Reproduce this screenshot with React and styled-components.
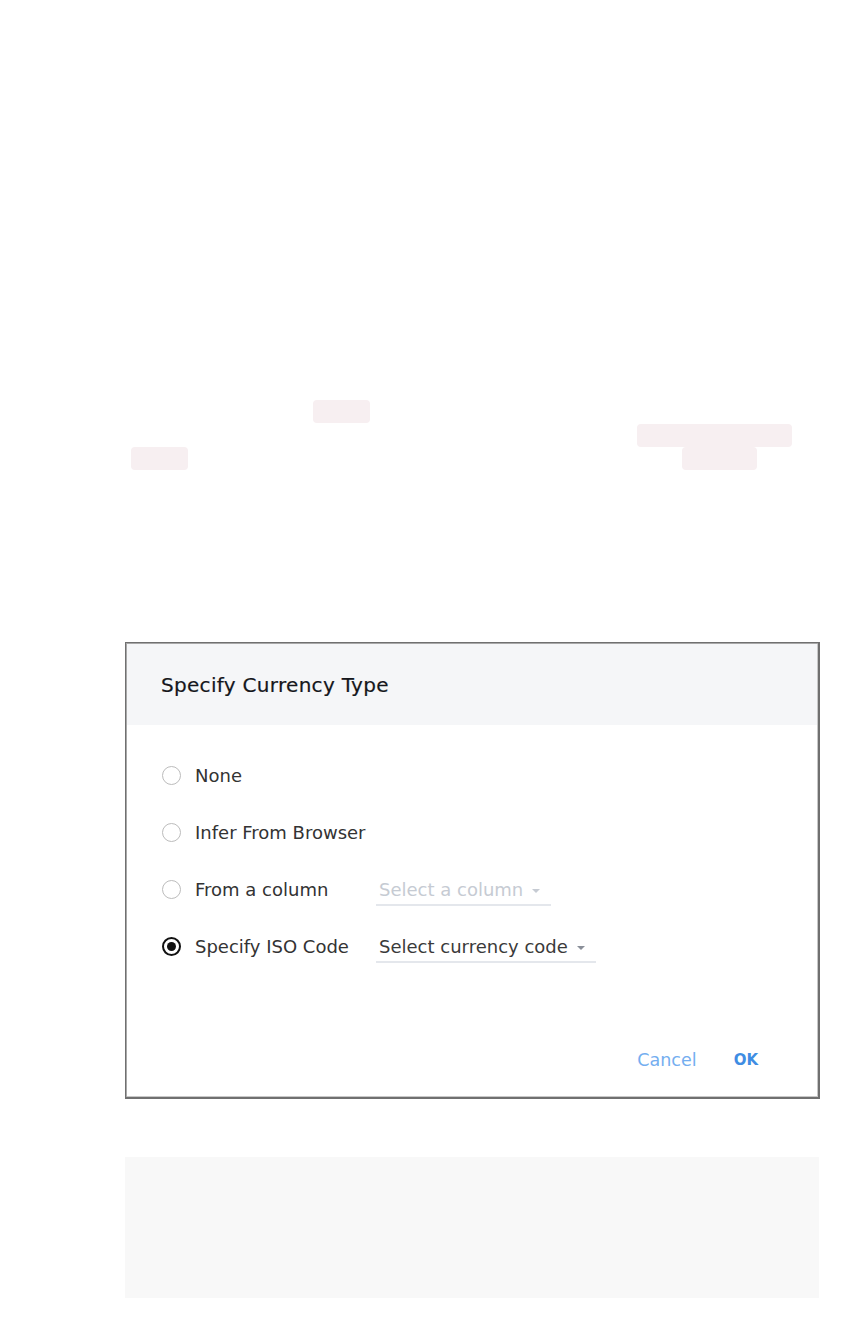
import React, { useState } from "react"
import styled, { createGlobalStyle } from "styled-components"

const GlobalStyle = createGlobalStyle`
  html, body {
    margin: 0;
    padding: 0;
    background: #ffffff;
  }
  body {
    font-family: "DejaVu Sans", "Open Sans", sans-serif;
    color: #222;
  }
`

const Page = styled.div`
  width: 864px;
  min-height: 1344px;
  padding-top: 400px;
  box-sizing: border-box;
`

const Notes = styled.div`
  display: flex;
  flex-direction: column;
`

const NoteLine = styled.div`
  display: flex;
  height: ${({ h }) => h}px;
`

const Pill = styled.span`
  display: block;
  margin-left: ${({ offset }) => offset}px;
  width: ${({ w }) => w}px;
  height: 23px;
  border-radius: 4px;
  background: #f7eff1;
`

const Modal = styled.div`
  margin: 172px 0 0 125px;
  width: 695px;
  height: 457px;
  box-sizing: border-box;
  border: 1px solid #707070;
  border-right-width: 2px;
  border-bottom-width: 2px;
  box-shadow: inset 1px 1px 0 #a8a8a8, inset -1px -1px 0 #c8c8c8;
  background: #fff;
  display: flex;
  flex-direction: column;
`

const Header = styled.div`
  height: 81px;
  margin: 1px 1px 0 1px;
  background: #f5f6f8;
  display: flex;
  align-items: center;
  padding-left: 34px;
`

const Title = styled.h2`
  margin: 0;
  font-size: 20px;
  font-weight: 500;
  color: #15171c;
  letter-spacing: 0.3px;
  -webkit-text-stroke: 0.2px #15171c;
`

const Body = styled.div`
  flex: 1;
  padding: 22px 0 0 36px;
  display: flex;
  flex-direction: column;
`

const Row = styled.label`
  display: flex;
  align-items: center;
  height: 57px;
  cursor: pointer;
`

const Radio = styled.span`
  width: 19px;
  height: 19px;
  box-sizing: border-box;
  border-radius: 50%;
  border: ${({ checked }) => (checked ? "2px solid #111" : "1.5px solid #bcbcbc")};
  display: flex;
  align-items: center;
  justify-content: center;
  &::after {
    content: "";
    width: 9px;
    height: 9px;
    border-radius: 50%;
    background: ${({ checked }) => (checked ? "#111" : "transparent")};
  }
`

const Label = styled.span`
  margin-left: 14px;
  width: 181px;
  font-size: 18px;
  color: #333;
`

const Select = styled.div`
  display: flex;
  align-items: center;
  gap: 9px;
  padding: 0 11px 4px 3px;
  border-bottom: 2px solid #e4e7ec;
  margin-top: 6px;
  font-size: 18px;
  color: ${({ muted }) => (muted ? "#c6cbd3" : "#3a3a3a")};
`

const Caret = styled.span`
  width: 0;
  height: 0;
  border-left: 4px solid transparent;
  border-right: 4px solid transparent;
  border-top: 4px solid ${({ muted }) => (muted ? "#c6cbd3" : "#8a8f99")};
  margin-top: 2px;
`

const Footer = styled.div`
  display: flex;
  justify-content: flex-end;
  align-items: center;
  gap: 37px;
  padding: 0 60px 0 0;
  height: 74px;
`

const Action = styled.button`
  border: 0;
  background: none;
  padding: 0;
  font-family: inherit;
  font-size: ${({ primary }) => (primary ? 15 : 17.5)}px;
  font-weight: ${({ primary }) => (primary ? 700 : 400)};
  color: ${({ primary }) => (primary ? "#3f8de3" : "#74aef0")};
  cursor: pointer;
`

const Panel = styled.div`
  margin: 58px 0 0 125px;
  width: 694px;
  height: 141px;
  background: #f8f8f8;
`

const options = [
  { id: "none", label: "None" },
  { id: "browser", label: "Infer From Browser" },
  { id: "column", label: "From a column", select: "Select a column", muted: true },
  { id: "iso", label: "Specify ISO Code", select: "Select currency code" },
]

const App = () => {
  const [choice, setChoice] = useState("iso")

  return (
    <Page>
      <GlobalStyle />
      <Notes>
        <NoteLine h={24}>
          <Pill offset={313} w={57} />
        </NoteLine>
        <NoteLine h={23}>
          <Pill offset={637} w={155} />
        </NoteLine>
        <NoteLine h={23}>
          <Pill offset={131} w={57} />
          <Pill offset={494} w={75} />
        </NoteLine>
      </Notes>

      <Modal>
        <Header>
          <Title>Specify Currency Type</Title>
        </Header>
        <Body>
          {options.map(opt => (
            <Row key={opt.id} onClick={() => setChoice(opt.id)}>
              <Radio checked={choice === opt.id} />
              <Label>{opt.label}</Label>
              {opt.select && (
                <Select muted={opt.muted}>
                  {opt.select}
                  <Caret muted={opt.muted} />
                </Select>
              )}
            </Row>
          ))}
        </Body>
        <Footer>
          <Action>Cancel</Action>
          <Action primary>OK</Action>
        </Footer>
      </Modal>

      <Panel />
    </Page>
  )
}

export default App
